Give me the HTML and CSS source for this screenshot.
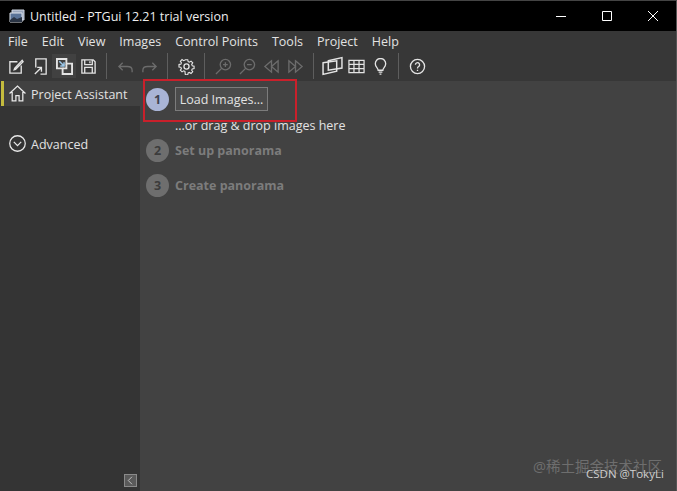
FILE: index.html
```html
<!DOCTYPE html>
<html lang="en">
<head>
    <meta charset="UTF-8">
    <title>Untitled - PTGui 12.21 trial version</title>
    <link rel="stylesheet" href="styles.css">
</head>

<body>
    <div class="window">
        <div class="titlebar">
            <svg class="app-icon" viewBox="0 0 16 15">
                <path d="M3 1h12v10H3z" fill="#9aa6bc" stroke="#cfd6e2" stroke-width="1" />
                <path d="M1 4h12v9H1z" fill="#5a7398" stroke="#dfe4ec" stroke-width="1" />
                <path d="M1 11l4-3 3 2 5-2v5H1z" fill="#2a3444" />
            </svg>
            <div class="title">Untitled - PTGui 12.21 trial version</div>
            <div class="win-buttons">
                <div class="win-button">
                    <svg viewBox="0 0 12 12"><path d="M1 6.500h10" /></svg>
                </div>
                <div class="win-button">
                    <svg viewBox="0 0 12 12"><path d="M1.500 1.500h9v9h-9z" /></svg>
                </div>
                <div class="win-button">
                    <svg viewBox="0 0 12 12"><path d="M1 1l10 10M11 1L1 11" /></svg>
                </div>
            </div>
        </div>

        <div class="menubar">
            <div class="menu-item">File</div>
            <div class="menu-item">Edit</div>
            <div class="menu-item">View</div>
            <div class="menu-item">Images</div>
            <div class="menu-item">Control Points</div>
            <div class="menu-item">Tools</div>
            <div class="menu-item">Project</div>
            <div class="menu-item">Help</div>
        </div>

        <div class="toolbar">
            <div class="tool">
                <svg viewBox="0 0 18 18"><path d="M10 4H2v12h12V8" /><path d="M7 11l-.5 1.500L8 12l8-8-1-1.500z" /></svg>
            </div>
            <div class="tool">
                <svg viewBox="0 0 18 18"><path d="M4 10V1h11v16H9" /><path d="M3 17l7-7M5.500 10H10v4.500" /></svg>
            </div>
            <div class="tool tool-active">
                <svg viewBox="0 0 18 18"><path d="M1 1h10v5h6v11H7v-6H1z" stroke-width="2" /><path d="M3.500 3.500l5 5M4.500 8.500h4v-4" stroke="#9cc8ea" stroke-width="1.600" /><path d="M11 6v5H7" stroke-width="2" /></svg>
            </div>
            <div class="tool">
                <svg viewBox="0 0 18 18"><path d="M2 2h12l2 2v12H2z" /><path d="M5 2v5h8V2M10.500 3.500v2M5 16v-6h8v6" /></svg>
            </div>
            <div class="tool-sep"></div>
            <div class="tool tool-off">
                <svg viewBox="0 0 18 18"><path d="M6 5L2 9l4 4M2 9h9q5 0 5 4v2" /></svg>
            </div>
            <div class="tool tool-off">
                <svg viewBox="0 0 18 18"><path d="M12 5l4 4-4 4M16 9H7q-5 0-5 4v2" /></svg>
            </div>
            <div class="tool-sep"></div>
            <div class="tool">
                <svg viewBox="0 0 18 18"><path d="M7.500 1h3l.5 2.300 1.600.7 2-1.300 2.100 2.100-1.300 2 .7 1.600 2.300.5v3l-2.300.5-.7 1.600 1.300 2-2.100 2.100-2-1.300-1.600.7-.5 2.300h-3L7 15.500l-1.600-.7-2 1.300-2.100-2.100 1.300-2-.7-1.600L-.4 10V7l2.300-.5.7-1.600-1.300-2 2.100-2.100 2 1.300L7 1.300z" transform="translate(1.400 1) scale(.85)" /><circle cx="9" cy="9" r="2.700" /></svg>
            </div>
            <div class="tool-sep"></div>
            <div class="tool tool-off">
                <svg viewBox="0 0 18 18"><circle cx="11" cy="7" r="5.500" /><path d="M7 11l-6 6M8.500 7h5M11 4.500v5" /></svg>
            </div>
            <div class="tool tool-off">
                <svg viewBox="0 0 18 18"><circle cx="11" cy="7" r="5.500" /><path d="M7 11l-6 6M8.500 7h5" /></svg>
            </div>
            <div class="tool tool-off">
                <svg viewBox="0 0 18 18"><path d="M9 3L2 9l7 6zM16 3L9 9l7 6z" /></svg>
            </div>
            <div class="tool tool-off">
                <svg viewBox="0 0 18 18"><path d="M2 3l7 6-7 6zM9 3l7 6-7 6z" /></svg>
            </div>
            <div class="tool-sep"></div>
            <div class="tool tool-wide">
                <svg viewBox="0 0 20 18"><path d="M6 4l13-3v10l-13 2z" /><path d="M1 6l13-2v10L1 17z" /></svg>
            </div>
            <div class="tool">
                <svg viewBox="0 0 18 18"><path d="M1 2.500h16v13H1zM1 6.800h16M1 11.200h16M6.300 2.500v13M11.700 2.500v13" stroke-width="1.300" /></svg>
            </div>
            <div class="tool">
                <svg viewBox="0 0 18 18"><path d="M6.500 13c0-2.500-3-3.500-3-7a5.500 5.500 0 0 1 11 0c0 3.500-3 4.500-3 7zM7 15h4M8 17h2" /></svg>
            </div>
            <div class="tool-sep"></div>
            <div class="tool">
                <svg viewBox="0 0 18 18"><circle cx="9" cy="9" r="7.500" /><path d="M6.800 7.200a2.200 2.200 0 1 1 3.400 1.800c-.8.500-1.200 1-1.200 2M9 12.500v1.300" /></svg>
            </div>
        </div>

        <div class="content">
            <div class="sidebar">
                <div class="side-item side-item-active">
                    <svg viewBox="0 0 16 16"><path d="M.5 8L8 1l7.500 7M3 6.500V15h3.500v-5h3v5H13V6.500" /></svg>
                    <span>Project Assistant</span>
                </div>
                <div class="side-item side-item-adv">
                    <svg viewBox="0 0 16 16"><circle cx="8" cy="8" r="7.300" /><path d="M4.500 6.500L8 10l3.500-3.500" /></svg>
                    <span>Advanced</span>
                </div>
                <div class="collapse">
                    <svg viewBox="0 0 12 12"><path d="M8 1L3 6l5 5" /></svg>
                </div>
            </div>

            <div class="main">
                <div class="step">
                    <div class="step-num step-num-on">1</div>
                    <div class="button">Load Images...</div>
                </div>
                <div class="step-hint">...or drag &amp; drop images here</div>
                <div class="step step-off">
                    <div class="step-num">2</div>
                    <div class="step-label">Set up panorama</div>
                </div>
                <div class="step step-off">
                    <div class="step-num">3</div>
                    <div class="step-label">Create panorama</div>
                </div>

                <div class="highlight"></div>
                <div class="mark-juejin">@稀土掘金技术社区</div>
                <div class="mark-csdn">CSDN @TokyLi</div>
            </div>
        </div>
    </div>
</body>
</html>
```

FILE: styles.css
```css
* {
    margin: 0;
    padding: 0;
    box-sizing: border-box;
}

body {
    background: #3a3a3a;
    font-family: "Open Sans", "Noto Sans CJK SC", sans-serif;
    font-size: 12.5px;
    color: #e2e2e2;
    overflow: hidden;
}

.window {
    width: 677px;
    height: 491px;
    display: flex;
    flex-direction: column;
    border-top: 1px solid #444;
    border-right: 1px solid #555;
}

.titlebar {
    height: 30px;
    flex: none;
    background: #000;
    display: flex;
    align-items: center;
    padding-left: 9px;
    color: #eee;
}

.app-icon {
    width: 16px;
    height: 15px;
    margin-right: 5px;
}

.title {
    flex: 1;
}

.win-buttons {
    display: flex;
}

.win-button {
    width: 46px;
    height: 30px;
    display: flex;
    justify-content: center;
    align-items: center;
}

.win-button svg {
    width: 12px;
    height: 12px;
    fill: none;
    stroke: #fff;
    stroke-width: 1;
}

.menubar {
    height: 22px;
    flex: none;
    background: #373737;
    display: flex;
    align-items: center;
    padding: 0 0 2px 8px;
    gap: 14px;
}

.toolbar {
    height: 28px;
    flex: none;
    background: #373737;
    display: flex;
    align-items: center;
    padding: 0 0 2px 4px;
}

.tool {
    width: 24px;
    height: 24px;
    display: flex;
    justify-content: center;
    align-items: center;
}

.tool svg {
    width: 17px;
    height: 17px;
    fill: none;
    stroke: #e4e4e4;
    stroke-width: 1.400;
}

.tool-active {
    background: #414141;
}

.tool-wide svg {
    width: 21px;
    height: 20px;
}

.tool-off svg {
    stroke: #6c6c6c;
}

.tool-sep {
    width: 1px;
    height: 26px;
    background: #5e5e5e;
    margin: 0 6px;
}

.content {
    flex: 1;
    display: flex;
    min-height: 0;
}

.sidebar {
    width: 140px;
    flex: none;
    background: #343434;
    position: relative;
}

.side-item {
    display: flex;
    align-items: center;
    height: 25px;
    padding-left: 9px;
    gap: 5px;
}

.side-item span {
    padding-top: 2px;
}

.side-item svg {
    width: 17px;
    height: 17px;
    fill: none;
    stroke: #e8e8e8;
    stroke-width: 1.200;
}

.side-item-active {
    background: #414141;
    border-left: 3px solid #c4bb3e;
    margin-left: 1px;
    padding-left: 5px;
}

.side-item-adv {
    margin-top: 25px;
}

.collapse {
    position: absolute;
    left: 124px;
    bottom: 4px;
    width: 13px;
    height: 13px;
    background: #5a5a5a;
    border: 1px solid #8a8a8a;
    display: flex;
    justify-content: center;
    align-items: center;
}

.collapse svg {
    width: 9px;
    height: 9px;
    fill: none;
    stroke: #ddd;
    stroke-width: 1;
}

.main {
    flex: 1;
    background: #424242;
    position: relative;
    padding: 6px 0 0 6px;
}

.step {
    display: flex;
    align-items: center;
    height: 24px;
    gap: 6px;
}

.step-off {
    margin-top: 11px;
    color: #7c7c7c;
    font-weight: 700;
}

.step-hint {
    margin: 4px 0 0 29px;
    height: 18px;
    line-height: 21px;
}

.step-hint + .step-off {
    margin-top: 5px;
}

.step-num {
    width: 23px;
    height: 23px;
    border-radius: 50%;
    background: #6e6e6e;
    color: #3c3c3c;
    font-weight: 700;
    display: flex;
    justify-content: center;
    align-items: center;
}

.step-num-on {
    background: #a9b4d6;
    color: #3e4250;
}

.button {
    width: 93px;
    height: 24px;
    background: #4b4b4b;
    border: 1px solid #7c7c7c;
    display: flex;
    justify-content: center;
    align-items: center;
}

.highlight {
    position: absolute;
    left: 3px;
    top: -2px;
    width: 154px;
    height: 43px;
    border: 2px solid #c9202b;
}

.mark-juejin {
    position: absolute;
    left: 393px;
    top: 374px;
    font-size: 14.500px;
    color: #6e6e6e;
    white-space: nowrap;
}

.mark-csdn {
    position: absolute;
    left: 446px;
    top: 385px;
    font-size: 11.500px;
    color: #cfcfcf;
    white-space: nowrap;
}
```
